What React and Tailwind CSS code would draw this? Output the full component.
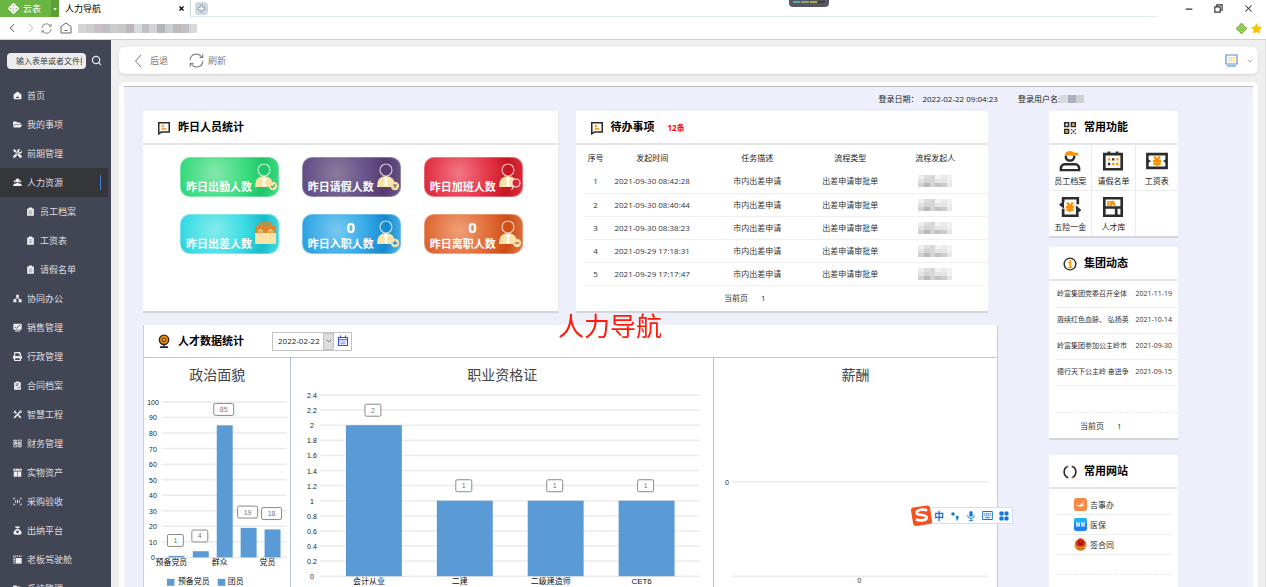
import React from "react";
import {
  ChevronLeft, ChevronRight, ChevronDown, Search, X, Minus, Copy,
} from "lucide-react";
import { FaFolderOpen, FaTools, FaPrint, FaStar, FaCaretDown } from "react-icons/fa";

const INK = "#2c2c2c";
const ORANGE = "#ff9100";

/* ---------- icons ---------- */

function CloverIcon({ className, color = "#ffffff", hole = "#6ab441" }) {
  return (
    <svg viewBox="0 0 24 24" className={className} aria-hidden="true">
      <g fill={color}>
        <rect x="7.500" y="1" width="9" height="9" rx="1.6" transform="rotate(45 12 5.500)" />
        <rect x="7.500" y="14" width="9" height="9" rx="1.6" transform="rotate(45 12 18.500)" />
        <rect x="1" y="7.500" width="9" height="9" rx="1.6" transform="rotate(45 5.500 12)" />
        <rect x="14" y="7.500" width="9" height="9" rx="1.6" transform="rotate(45 18.500 12)" />
      </g>
      <g fill={hole}>
        <circle cx="12" cy="6" r="1.7" />
        <circle cx="12" cy="18" r="1.7" />
        <circle cx="6" cy="12" r="1.7" />
        <circle cx="18" cy="12" r="1.7" />
      </g>
    </svg>
  );
}

function ReloadIcon({ className }) {
  return (
    <svg viewBox="0 0 24 24" className={className} fill="none" stroke="currentColor" strokeWidth="1.7" aria-hidden="true">
      <path d="M1.800 11a10 10 0 0 1 18.200-5M22.200 13A10 10 0 0 1 4 18" />
      <path d="M22 2v5h-5M2 22v-5h5" />
    </svg>
  );
}

function HomeSolid({ className }) {
  return (
    <svg viewBox="0 0 24 24" className={className} fill="currentColor" aria-hidden="true">
      <path d="M12 1 1.500 9.500V20q0 2 2 2h17q2 0 2-2V9.500zM7.500 18.500a4.500 4 0 0 1 9 0z" fillRule="evenodd" />
    </svg>
  );
}

function PeopleIcon({ className }) {
  return (
    <svg viewBox="0 0 24 24" className={className} aria-hidden="true">
      <g fill="currentColor">
        <circle cx="12" cy="6.500" r="5.500" />
        <circle cx="4.500" cy="9" r="2.600" />
        <circle cx="19.500" cy="9" r="2.600" />
        <path d="M0 21q0-6 7-8h10q7 2 7 8z" />
      </g>
      <path d="M5 14.500h4M15 14.500h4" stroke="#35363a" strokeWidth="1.400" />
    </svg>
  );
}

function BoardIcon({ className }) {
  return (
    <svg viewBox="0 0 24 24" className={className} aria-hidden="true">
      <path d="M3 4h5V1h8v3h5v19H3z" fill="currentColor" />
      <path d="M7 10h10M7 14h10M7 18h10" stroke="#7c7f8b" strokeWidth="1.600" />
    </svg>
  );
}

function ContractIcon({ className }) {
  return (
    <svg viewBox="0 0 24 24" className={className} aria-hidden="true">
      <path d="M3 3h5V1h8v2h5v20H3z" fill="currentColor" />
      <path d="M7 8h10M7 12h6M12 16l3 3 5-5" stroke="#424654" strokeWidth="2" fill="none" />
    </svg>
  );
}

function NodesIcon({ className }) {
  return (
    <svg viewBox="0 0 24 24" className={className} fill="currentColor" aria-hidden="true">
      <path d="M8.500 2h7v7h-7zM1 14h8v8H1zM15 14h8v8h-8z" />
      <path d="M12 8v4M5 15l3-4h8l3 4" stroke="currentColor" strokeWidth="2" fill="none" />
    </svg>
  );
}

function TrendIcon({ className }) {
  return (
    <svg viewBox="0 0 24 24" className={className} aria-hidden="true">
      <path d="M1 2h22v16H1zM5 20h14v2.500H5z" fill="currentColor" />
      <path d="m5 10 4 4 10-9" stroke="#424654" strokeWidth="2.400" fill="none" />
    </svg>
  );
}

function AssetIcon({ className }) {
  return (
    <svg viewBox="0 0 24 24" className={className} aria-hidden="true">
      <path d="M1 2h22v5H1zM2 9h9.300v14H2zM12.700 9H22v14h-9.300z" fill="currentColor" />
      <path d="M7 2v5M17 2v5" stroke="#424654" strokeWidth="1.600" />
    </svg>
  );
}

function CockpitIcon({ className }) {
  return (
    <svg viewBox="0 0 24 24" className={className} aria-hidden="true">
      <path d="M7 8h16v15H7z" fill="currentColor" />
      <path d="M1 3h22M3 6v17" stroke="currentColor" strokeWidth="3.500" strokeDasharray="3 1.800" fill="none" />
    </svg>
  );
}

function CrossToolsIcon({ className }) {
  return (
    <svg viewBox="0 0 24 24" className={className} fill="none" stroke="currentColor" strokeWidth="4" aria-hidden="true">
      <path d="M3 21 20 4M4 4l5 5M14 14l7 7" />
      <path d="M1.500 6.500 6.500 1.500M17 2.500h5v5" strokeWidth="2.500" />
    </svg>
  );
}

function ScanIcon({ className }) {
  return (
    <svg viewBox="0 0 24 24" className={className} fill="none" stroke="currentColor" strokeWidth="2" aria-hidden="true">
      <path d="M2 7V3h4M18 3h4v4M22 17v4h-4M6 21H2v-4M7 8v8M12 7v10M17 8v8M10 12h4" />
    </svg>
  );
}

function MoneyBagIcon({ className }) {
  return (
    <svg viewBox="0 0 24 24" className={className} aria-hidden="true">
      <path d="M5 1h14l-3 5H8zM9 8h6c5 3 8 7 8 10q0 5-6 5H7q-6 0-6-5c0-3 3-7 8-10z" fill="currentColor" />
      <circle cx="12" cy="15.500" r="3.500" fill="#424654" />
    </svg>
  );
}

function GridStackIcon({ className }) {
  return (
    <svg viewBox="0 0 24 24" className={className} fill="none" stroke="currentColor" strokeWidth="2" aria-hidden="true">
      <path d="M2 3h8v6H2zM14 3h8v6h-8zM2 15h8v6H2zM14 15h8v6h-8zM1 12h22M6 3v6M18 15v6" />
    </svg>
  );
}

function NoteIcon({ className }) {
  return (
    <svg viewBox="0 0 24 24" className={className} fill="none" aria-hidden="true">
      <path d="M3 3h18v16H7.500L3 22z" stroke={INK} strokeWidth="2.600" />
      <path d="M8 6.500h4v4H8zM8 12h8v3H8z" fill={ORANGE} opacity="0.850" />
    </svg>
  );
}

function WebcamIcon({ className }) {
  return (
    <svg viewBox="0 0 24 24" className={className} fill="none" aria-hidden="true">
      <circle cx="12" cy="10" r="8" fill={ORANGE} stroke={INK} strokeWidth="2.400" />
      <circle cx="12" cy="10" r="3.500" fill={ORANGE} stroke={INK} strokeWidth="1.600" />
      <path d="M12 18v4M5 22.500h14" stroke={INK} strokeWidth="2.600" />
    </svg>
  );
}

function QrIcon({ className }) {
  return (
    <svg viewBox="0 0 24 24" className={className} fill="none" strokeWidth="2.800" aria-hidden="true">
      <path d="M3 3h6.500v6.500H3zM14.500 3H21v6.500h-6.500zM3 14.500h6.500V21H3z" stroke={INK} />
      <path d="M16 4.500h3.500V8H16zM4.500 16H8v3.500H4.500z" fill={ORANGE} />
      <path d="m14 14 8 8M22 14l-8 8" stroke={INK} strokeWidth="2" strokeDasharray="3 1.500" />
    </svg>
  );
}

function InfoIcon({ className }) {
  return (
    <svg viewBox="0 0 24 24" className={className} fill="none" aria-hidden="true">
      <circle cx="12" cy="12" r="10" stroke={INK} strokeWidth="2.400" />
      <path d="M9 9.500h3.500V18M9 18h7M12.500 5v2.500" stroke={ORANGE} strokeWidth="2.600" />
    </svg>
  );
}

function BracketRingIcon({ className }) {
  return (
    <svg viewBox="0 0 24 24" className={className} fill="none" stroke={INK} strokeWidth="2.800" aria-hidden="true">
      <path d="M9 2.300a10.200 10.200 0 0 0 0 19.400M15 2.300a10.200 10.200 0 0 1 0 19.400" />
      <path d="M15 21.800h2.500M7 2.500h2" stroke={ORANGE} strokeWidth="2" />
    </svg>
  );
}

const yuan = "M8.800 7 12 11l3.200-4M7.500 12h9M8 15h8M12 11v6.500";

function StaffIcon({ className }) {
  return (
    <svg viewBox="0 0 24 24" className={className} fill="none" strokeWidth="2.600" aria-hidden="true">
      <path d="M7.500 6v2.500a4.800 4.800 0 0 0 9 0V6" stroke={INK} />
      <path d="M6.500 6q0-5 5.500-5 3.500 0 4.500 2h4.500v3z" fill={ORANGE} />
      <path d="M2 22v-2q0-3.500 4-4.500h12q4 1 4 4.500v2z" stroke={INK} />
    </svg>
  );
}

function LeaveIcon({ className }) {
  return (
    <svg viewBox="0 0 24 24" className={className} fill="none" aria-hidden="true">
      <path d="M2.500 4.500h19V21h-19zM7.500 1.500v4M16.500 1.500v4" stroke={INK} strokeWidth="2.900" />
      <path d="M6.500 9h2.500v2.500H6.500zM15.500 9H18v2.500h-2.500zM11 14h2.500v2.500H11zM15.500 14H18v2.500h-2.500z" fill={ORANGE} />
      <path d="M11 9h2.500v2.500H11zM6.500 14h2.500v2.500H6.500z" fill={INK} />
    </svg>
  );
}

function PayIcon({ className }) {
  return (
    <svg viewBox="0 0 24 24" className={className} fill="none" aria-hidden="true">
      <path d="M1.500 4.500h21v15h-21z" stroke={INK} strokeWidth="2.800" />
      <path d="M1 9.500 5.500 12 1 15zM23 9.500 18.500 12l4.500 3z" fill={INK} />
      <path d={yuan} stroke={ORANGE} strokeWidth="2.500" />
    </svg>
  );
}

function InsuranceIcon({ className }) {
  return (
    <svg viewBox="0 0 24 24" className={className} fill="none" aria-hidden="true">
      <path d="M4.500 6.500V2.500h16V9M20 18v3.500H4.500V14" stroke={INK} strokeWidth="2.900" />
      <path d="M0 9.500 5.500 5v9zM24.500 15.500 18.500 10v10z" fill={INK} />
      <path d={yuan} stroke={ORANGE} strokeWidth="2.500" />
    </svg>
  );
}

function TalentIcon({ className }) {
  return (
    <svg viewBox="0 0 24 24" className={className} fill="none" aria-hidden="true">
      <path d="M2.500 2.500h19v19h-19zM2.500 12.500h19M15.500 13v8.500" stroke={INK} strokeWidth="2.900" />
      <path d="M7 11V5.500M10 11V5.500M11.500 5.500l2.500 5.500" stroke={ORANGE} strokeWidth="2.400" />
    </svg>
  );
}

function PersonBadge({ kind }) {
  if (kind === "case") {
    return (
      <svg viewBox="0 0 24 28" className="h-7 w-6" aria-hidden="true">
        <path d="M7 6V3.500h9V6" fill="none" stroke="#d58a32" strokeWidth="2.500" />
        <rect x="1" y="6" width="21" height="18" rx="1" fill="#fae3a6" />
        <path d="M1 6h21v7H1z" fill="#d58a32" />
        <path d="M5 10h3v4H5zM15 10h3v4h-3z" fill="#d58a32" stroke="#fae3a6" />
      </svg>
    );
  }
  return (
    <svg viewBox="0 0 24 28" className="h-7 w-6" fill="none" aria-hidden="true">
      <circle cx="10" cy="7" r="6" stroke="#ffffff" strokeOpacity="0.750" strokeWidth="1.100" />
      <path d="M1 24q0-11 9-11t9 11z" fill="#fae3a6" />
      <path d="m10 13-2 3 1 2-.500 4 1.500 2 1.500-2L11 18l1-2z" fill="#ffffff" />
      {kind === "search" ? (
        <g stroke="#ffe9e4" strokeWidth="1.100">
          <circle cx="18" cy="20" r="4" fill="#d62a38" />
          <path d="m16 23-2.500 4" />
        </g>
      ) : (
        <g>
          <circle cx="19" cy="23" r="4.200" fill="#fae3a6" />
          {kind === "check" && <path d="m17 23 1.500 1.500L21 21.500" stroke="#36b868" strokeWidth="1.200" />}
          {kind === "x" && <path d="m17.500 21.500 3 3m0-3-3 3" stroke="#6a5684" strokeWidth="1.300" />}
          {kind === "plus" && <path d="M16.800 23h4.400M19 20.800v4.400" stroke="#2b90cc" strokeWidth="1.300" />}
          {kind === "minus" && <path d="M16.800 23h4.400" stroke="#d06030" strokeWidth="1.400" />}
        </g>
      )}
    </svg>
  );
}

/* ---------- small pieces ---------- */

function NameBlocks() {
  return (
    <div className="mx-auto grid w-[34px] grid-cols-6" aria-label="已隐藏">
      <i className="h-1 bg-[#eeeeee]" /><i className="h-1 bg-[#dedede]" /><i className="h-1 bg-[#d6d6d6]" />
      <i className="h-1 bg-[#f4f4f4]" /><i className="h-1 bg-[#e8ecec]" /><i className="h-1 bg-[#f2f2f2]" />
      <i className="h-1 bg-[#e2e2e2]" /><i className="h-1 bg-[#d4d4d4]" /><i className="h-1 bg-[#d9d9d9]" />
      <i className="h-1 bg-[#e6e6e6]" /><i className="h-1 bg-[#e6e6e6]" /><i className="h-1 bg-[#edf1f1]" />
      <i className="h-1 bg-[#d0d0d0]" /><i className="h-1 bg-[#b9b9b9]" /><i className="h-1 bg-[#d2d2d2]" />
      <i className="h-1 bg-[#c3c3c3]" /><i className="h-1 bg-[#cccccc]" /><i className="h-1 bg-[#e1e8e8]" />
    </div>
  );
}

function Panel({ icon: Icon, title, extra, className = "", children }) {
  return (
    <section className={`border-b-2 border-[#d3d6dc] bg-white ${className}`}>
      <header className="flex h-[34px] items-center gap-[7px] border-b-2 border-[#e6e6e6] pt-px pl-[14px]">
        <Icon className="size-[14px]" />
        <h2 className="text-[11px] font-bold text-black">{title}</h2>
        {extra}
      </header>
      {children}
    </section>
  );
}

/* ---------- browser chrome ---------- */

function TabBar() {
  return (
    <div className="flex h-[17px] items-stretch">
      <button className="flex w-[51px] items-center gap-1 bg-[#6ab441] pl-2 text-[9px] text-white">
        <CloverIcon className="size-[11px]" />
        云表
      </button>
      <button aria-label="菜单" className="flex w-2 items-center justify-center bg-[#5aa032] text-white">
        <FaCaretDown className="size-[6px]" />
      </button>
      <div className="flex w-[132px] items-center justify-between border-r border-[#cfdde6] pr-[5px] pl-[6px] text-[9px] text-black">
        人力导航
        <button aria-label="关闭标签"><X className="size-[7px]" strokeWidth={4} /></button>
      </div>
      <div className="flex flex-1 items-center border-b border-[#dfeaf2] pl-1">
        <button aria-label="新建标签" className="flex size-[13px] items-center justify-center rounded-sm bg-[#cdd9e2]">
          <svg viewBox="0 0 12 12" className="size-[9px]" fill="#ffffff" stroke="#7f8d99" strokeWidth="1" aria-hidden="true">
            <path d="M4.500 1.500h3v3h3v3h-3v3h-3v-3h-3v-3h3z" />
          </svg>
        </button>
      </div>
      <div className="flex w-[109px] items-center justify-end gap-5 pr-3 text-[#333333]">
        <button aria-label="最小化"><Minus className="size-[10px]" strokeWidth={3} /></button>
        <button aria-label="还原">
          <svg viewBox="0 0 16 16" className="size-[9px]" fill="none" stroke="currentColor" strokeWidth="2" aria-hidden="true">
            <path d="M1.500 5h9.500v9.500H1.500zM5 5V1.500h9.500V11H11" />
          </svg>
        </button>
        <button aria-label="关闭"><X className="size-[11px]" strokeWidth={2.2} /></button>
      </div>
    </div>
  );
}

function AddressBar() {
  return (
    <div className="flex h-[23px] items-center border-b border-[#cfcfcf] pr-1 pl-[5px] text-[#666666]">
      <button aria-label="后退"><ChevronLeft className="size-[14px]" strokeWidth={1.8} /></button>
      <button aria-label="前进" className="ml-[5px] text-[#c4c4c4]"><ChevronRight className="size-[14px]" strokeWidth={1.8} /></button>
      <button aria-label="重新加载" className="ml-[3px]"><ReloadIcon className="size-[11px]" /></button>
      <button aria-label="主页" className="ml-[8px]">
        <svg viewBox="0 0 24 24" className="size-3" fill="none" stroke="currentColor" strokeWidth="2" aria-hidden="true">
          <path d="M12 2 2 9v13h20V9zM9 17h6" />
        </svg>
      </button>
      <div className="ml-[6px] flex h-[9px] w-[119px]">
        <i className="flex-1 bg-[#d6d5d6]" /><i className="flex-1 bg-[#d0cdd0]" /><i className="flex-1 bg-[#c9c1c4]" />
        <i className="flex-1 bg-[#bfbfc4]" /><i className="flex-1 bg-[#cbcacc]" /><i className="flex-1 bg-[#c8c8c8]" />
        <i className="flex-1 bg-[#bdb6ba]" /><i className="flex-1 bg-[#d9d9dd]" /><i className="flex-1 bg-[#bfc0c4]" />
        <i className="flex-1 bg-[#d4d4d8]" /><i className="flex-1 bg-[#b2b5b9]" /><i className="flex-1 bg-[#cbced2]" />
        <i className="flex-1 bg-[#c0b9b8]" /><i className="flex-1 bg-[#bfc1c6]" /><i className="flex-1 bg-[#d9d9dd]" />
      </div>
      <div className="ml-auto flex items-center gap-1">
        <CloverIcon className="size-[11px]" color="#7dbb42" hole="#d9f0b8" />
        <FaStar className="size-[11px] text-[#ffc400]" />
      </div>
    </div>
  );
}

/* ---------- sidebar ---------- */

const NAV = [
  { label: "首页", icon: HomeSolid },
  { label: "我的事项", icon: FaFolderOpen },
  { label: "前期管理", icon: FaTools },
  { label: "人力资源", icon: PeopleIcon, active: true },
  { label: "员工档案", icon: BoardIcon, sub: true },
  { label: "工资表", icon: BoardIcon, sub: true },
  { label: "请假名单", icon: BoardIcon, sub: true },
  { label: "协同办公", icon: NodesIcon },
  { label: "销售管理", icon: TrendIcon },
  { label: "行政管理", icon: FaPrint },
  { label: "合同档案", icon: ContractIcon },
  { label: "智慧工程", icon: CrossToolsIcon },
  { label: "财务管理", icon: GridStackIcon },
  { label: "实物资产", icon: AssetIcon },
  { label: "采购验收", icon: ScanIcon },
  { label: "出纳平台", icon: MoneyBagIcon },
  { label: "老板驾驶舱", icon: CockpitIcon },
  { label: "系统管理", icon: FaFolderOpen },
];

function Sidebar() {
  return (
    <aside className="w-[111px] shrink-0 overflow-y-auto bg-[#424654] [scrollbar-width:none]">
      <div className="flex h-[41px] items-center gap-[5px] pl-[7px]">
        <input
          aria-label="搜索"
          placeholder="输入表单或者文件搜索"
          className="h-4 w-[79px] rounded-sm bg-[#ececee] pr-1 pl-[9px] text-[8px] placeholder:text-[#444444]"
        />
        <button aria-label="查找" className="text-[#e4e5e8]"><Search className="size-[11px]" strokeWidth={2.8} /></button>
      </div>
      <nav>
        {NAV.map(({ label, icon: Icon, sub, active }) => (
          <a
            key={label}
            href="#"
            className={
              "mr-[3px] flex h-[29px] items-center gap-[5px] text-[9px] text-[#dcdde1] " +
              (sub ? "pl-[26px] " : "pl-[13px] ") +
              (active ? "bg-[#35363a]" : "")
            }
          >
            <Icon className="size-[9px] text-[#f0f0f2]" />
            {label}
            {active && <span className="mr-[7px] ml-auto h-[15px] w-px bg-[#3f7fd0]" />}
          </a>
        ))}
      </nav>
    </aside>
  );
}

/* ---------- panels ---------- */

const STATS = [
  { label: "昨日出勤人数", kind: "check", bg: "bg-[radial-gradient(circle_at_35%_40%,#85e8ac,#3ddc80_45%,#1fc568_75%,#45dc88)]" },
  { label: "昨日请假人数", kind: "x", bg: "bg-[radial-gradient(circle_at_35%_40%,#8a7c9c,#67528a_45%,#543a70_75%,#6b588a)]" },
  { label: "昨日加班人数", kind: "search", bg: "bg-[radial-gradient(circle_at_35%_40%,#f07884,#e43548_45%,#c81420_75%,#dc3040)]" },
  { label: "昨日出差人数", kind: "case", bg: "bg-[radial-gradient(circle_at_35%_40%,#84ecec,#3cdce4_45%,#18bccc_75%,#48dce4)]" },
  { label: "昨日入职人数", kind: "plus", value: "0", bg: "bg-[radial-gradient(circle_at_35%_40%,#78c8f0,#35a9e6_45%,#1488cc_75%,#50b8ec)]" },
  { label: "昨日离职人数", kind: "minus", value: "0", bg: "bg-[radial-gradient(circle_at_35%_40%,#f0a078,#e26c38_45%,#cc4c14_75%,#e07848)]" },
];

function StatsPanel() {
  return (
    <Panel icon={NoteIcon} title="昨日人员统计" className="flex-[415] border-r border-r-[#e4e6ec]">
      <div className="grid grid-cols-3 gap-x-[23px] gap-y-[17px] pt-3 pr-[35px] pl-[37px]">
        {STATS.map((s) => (
          <div key={s.label} className={`flex h-10 items-end justify-between rounded-[10px] border border-white/30 pl-[5px] ${s.bg}`}>
            <div className="flex min-w-0 flex-col items-center pb-px text-white">
              {s.value && <span className="pl-5 text-[15px] leading-[18px] font-bold">{s.value}</span>}
              <span className="text-[11px] leading-4 font-bold whitespace-nowrap">{s.label}</span>
            </div>
            <div className="flex h-full items-center">
              <PersonBadge kind={s.kind} />
            </div>
          </div>
        ))}
      </div>
    </Panel>
  );
}

const TODOS = [
  ["1", "2021-09-30 08:42:28"],
  ["2", "2021-09-30 08:40:44"],
  ["3", "2021-09-30 08:38:23"],
  ["4", "2021-09-29 17:18:31"],
  ["5", "2021-09-29 17:17:47"],
];

function TodoPanel() {
  return (
    <Panel
      icon={NoteIcon}
      title="待办事项"
      className="flex-[413]"
      extra={<span className="ml-[6px] text-[8px] font-bold text-[#ff0000]">12条</span>}
    >
      <table className="ml-2 w-[98%] table-fixed text-center text-[8px] whitespace-nowrap text-[#333333]">
        <colgroup>
          <col className="w-[6%]" /><col className="w-[22%]" /><col className="w-[30%]" /><col className="w-[16%]" /><col className="w-[26%]" />
        </colgroup>
        <thead>
          <tr className="h-[25px] text-[#222222]">
            <th className="font-normal">序号</th>
            <th className="font-normal">发起时间</th>
            <th className="font-normal">任务描述</th>
            <th className="font-normal">流程类型</th>
            <th className="font-normal">流程发起人</th>
          </tr>
        </thead>
        <tbody>
          {TODOS.map(([n, time]) => (
            <tr key={n} className="h-[23px] border-b border-[#f0f0f0]">
              <td>{n}</td>
              <td>{time}</td>
              <td>市内出差申请</td>
              <td>出差申请审批单</td>
              <td><NameBlocks /></td>
            </tr>
          ))}
        </tbody>
      </table>
      <p className="flex h-[25px] items-center gap-[13px] pl-[36%] text-[8px] text-[#333333]">
        <span>当前页</span>
        <span>1</span>
      </p>
    </Panel>
  );
}

/* ---------- charts ---------- */

function ValueTag({ x, y, w, children }) {
  return (
    <g>
      <rect x={x - w / 2} y={y - 6} width={w} height="12" rx="1.500" fill="#ffffff" stroke="#8a8a8a" />
      <text x={x} y={y + 2.5} textAnchor="middle" fontSize="7" fill="#777777">{children}</text>
    </g>
  );
}

function AxisGrid({ values, x0, x1, labelX, y0, step }) {
  return values.map((v, i) => (
    <g key={v}>
      <path d={`M${x0} ${y0 + i * step}H${x1}`} stroke="#ebebeb" strokeWidth="1.500" />
      <text x={labelX} y={y0 + i * step + 3} textAnchor="middle" fontSize="7" fill="#222222">{v}</text>
    </g>
  ));
}

const chartText = "block w-full font-['Liberation_Sans','Noto_Sans_CJK_SC',sans-serif]";

function PoliticsChart() {
  const bars = [
    { x: 32.5, v: 1, w: 16, tag: 149 },
    { x: 57, v: 4, w: 16, tag: 144.5 },
    { x: 81, v: 85, w: 20, tag: 17.5 },
    { x: 105, v: 19, w: 20, tag: 120.5 },
    { x: 129, v: 18, w: 20, tag: 122 },
  ];
  return (
    <svg viewBox="0 0 147 212" className={chartText} role="img" aria-label="政治面貌">
      <AxisGrid values={["100", "90", "80", "70", "60", "50", "40", "30", "20", "10", "0"]} x0={18} x1={143} labelX={9} y0={10} step={15.6} />
      {bars.map((b) => (
        <g key={b.x}>
          <rect x={b.x - 8} y={166 - b.v * 1.56} width="16" height={b.v * 1.56} fill="#5b9bd5" />
          <ValueTag x={b.x - 1} y={b.tag} w={b.w}>{b.v}</ValueTag>
        </g>
      ))}
      <g fontSize="8" fill="#111111">
        <text x="27.500" y="174" textAnchor="middle">预备党员</text>
        <text x="76" y="174" textAnchor="middle">群众</text>
        <text x="124" y="174" textAnchor="middle">党员</text>
        <rect x="23" y="187.500" width="7.500" height="7" fill="#5b9bd5" />
        <text x="34" y="193">预备党员</text>
        <rect x="74" y="187.500" width="7.500" height="7" fill="#5b9bd5" />
        <text x="84" y="193">团员</text>
      </g>
    </svg>
  );
}

function CertificateChart() {
  const bars = [
    { x: 83, v: 2, label: "会计从业" },
    { x: 174, v: 1, label: "二建" },
    { x: 265, v: 1, label: "二级建造师" },
    { x: 356, v: 1, label: "CET6" },
  ];
  const top = 3;
  const step = 15.12;
  const base = top + step * 12;
  return (
    <svg viewBox="0 0 422 212" className={chartText} role="img" aria-label="职业资格证">
      <AxisGrid
        values={["2.4", "2.2", "2", "1.8", "1.6", "1.4", "1.2", "1", "0.8", "0.6", "0.4", "0.2", "0"]}
        x0={29} x1={409} labelX={21} y0={top} step={step}
      />
      {bars.map((b) => (
        <g key={b.x}>
          <rect x={b.x - 28} y={base - b.v * step * 5} width="56" height={b.v * step * 5} fill="#5b9bd5" />
          <ValueTag x={b.x - 1} y={base - b.v * step * 5 - 15} w={16}>{b.v}</ValueTag>
          <text x={b.x - 5} y={base + 8} textAnchor="middle" fontSize="8" fill="#111111">{b.label}</text>
        </g>
      ))}
    </svg>
  );
}

function SalaryChart() {
  return (
    <svg viewBox="0 0 284 212" className={chartText} role="img" aria-label="薪酬">
      <g stroke="#ebebeb" strokeWidth="1.500">
        <path d="M18 90H275M18 185H275" />
      </g>
      <g fontSize="7" fill="#222222" textAnchor="middle">
        <text x="13" y="93">0</text>
        <text x="146" y="192">0</text>
      </g>
    </svg>
  );
}

function DataPanel() {
  const heading = "text-center text-[14px] leading-[34px] text-[#444444]";
  return (
    <section className="border-x border-[#c6d2e2] bg-white">
      <header className="flex h-[33px] items-center gap-[7px] border-b border-[#b9cbdc] pt-px pl-[13px]">
        <WebcamIcon className="size-[14px]" />
        <h2 className="pt-px text-[11px] font-bold text-black">人才数据统计</h2>
        <div className="ml-[21px] flex h-[19px] items-stretch border border-[#c4c4c4]">
          <label className="flex items-stretch">
            <span className="sr-only">日期</span>
            <select className="w-[50px] appearance-none bg-white pl-[5px] text-[8px] text-[#222222]">
              <option>2022-02-22</option>
            </select>
            <span className="flex w-[11px] items-center justify-center border border-[#c2c2c2] bg-[#dddddd] text-[#555555]">
              <ChevronDown className="size-2" />
            </span>
          </label>
          <button aria-label="打开日历" className="flex w-[17px] items-center justify-center">
            <svg viewBox="0 0 24 24" className="size-3" fill="none" stroke="#3355dd" strokeWidth="2.400" aria-hidden="true">
              <path d="M3 5h18v16H3zM2 9.500h20M7 1v5M17 1v5" />
              <path d="M7 14h10M7 17.500h10" strokeWidth="2" strokeOpacity="0.650" />
            </svg>
          </button>
        </div>
      </header>
      <div className="flex">
        <div className="flex-[147]">
          <h3 className={heading}>政治面貌</h3>
          <PoliticsChart />
        </div>
        <div className="flex-[423] border-l border-[#b3c3d8]">
          <h3 className={heading}>职业资格证</h3>
          <CertificateChart />
        </div>
        <div className="flex-[284] border-l border-[#b3c3d8]">
          <h3 className={heading}>薪酬</h3>
          <SalaryChart />
        </div>
      </div>
    </section>
  );
}

/* ---------- right column ---------- */

const FUNCTIONS = [
  { label: "员工档案", icon: StaffIcon },
  { label: "请假名单", icon: LeaveIcon },
  { label: "工资表", icon: PayIcon },
  { label: "五险一金", icon: InsuranceIcon },
  { label: "人才库", icon: TalentIcon },
];

const NEWS = [
  ["岭富集团党委召开全体", "2021-11-19"],
  ["赓续红色血脉、 弘扬英", "2021-10-14"],
  ["岭富集团参加公主岭市", "2021-09-30"],
  ["德行天下公主岭 奋进争", "2021-09-15"],
];

function SiteLogo({ name }) {
  if (name === "吉事办") {
    return (
      <svg viewBox="0 0 26 26" className="size-[13px]" aria-hidden="true">
        <rect width="26" height="26" rx="5" fill="#f58a48" />
        <path d="M4 13c5 3 8 1 10-1l6-5-3 6 4 1c-5 4-12 5-17-1z" fill="#fff3ea" />
      </svg>
    );
  }
  if (name === "医保") {
    return (
      <svg viewBox="0 0 26 26" className="size-[13px]" aria-hidden="true">
        <rect width="26" height="26" rx="5" fill="#1f80f4" />
        <path d="M5 0h16q5 0 5 5v6H0V5q0-5 5-5z" fill="#22aef8" />
        <path d="M4 9h8v8H4zM14 9h8v8h-8z" fill="#d4ecff" />
        <path d="M6 12h4M8 10v6M16 12h5M18.500 10v6" stroke="#5cb0f4" />
      </svg>
    );
  }
  return (
    <svg viewBox="0 0 26 26" className="size-[13px]" aria-hidden="true">
      <circle cx="13" cy="14" r="12" fill="#e0962c" />
      <path d="M3 9q10-17 20 0l-2 6q-8 6-16 0z" fill="#e02c14" />
      <path d="M8 8h4M14 8h4M9 12h8" stroke="#3c0d05" strokeWidth="2" />
      <path d="M6 20q7 5 14 0" stroke="#a8601c" strokeWidth="2" fill="none" />
    </svg>
  );
}

function RightColumn() {
  return (
    <div className="flex w-[129px] shrink-0 flex-col">
      <Panel icon={QrIcon} title="常用功能" className="mb-[9px]">
        <div className="grid grid-cols-3 gap-px bg-[#ebebeb]">
          {FUNCTIONS.map(({ label, icon: Icon }) => (
            <button key={label} className="flex h-[45px] flex-col items-center justify-center gap-px bg-white pt-1 text-[8px] leading-4 text-[#222222]">
              <Icon className="size-[22px]" />
              {label}
            </button>
          ))}
          <span className="bg-white" />
        </div>
      </Panel>
      <Panel icon={InfoIcon} title="集团动态" className="mb-[15px]">
        <ul className="pt-px pl-[6px] text-[#333333]">
          {NEWS.map(([title, date]) => (
            <li key={date} className="h-[26px] border-b border-[#eeeeee]">
              <a href="#" className="flex h-full items-center justify-between pr-[6px] pl-[2px] text-[7px] whitespace-nowrap">
                <span>{title}</span>
                <span>{date}</span>
              </a>
            </li>
          ))}
          <li className="h-[27px] border-b border-dashed border-[#e4e6ee]" />
        </ul>
        <p className="flex h-[25px] items-center gap-[13px] pl-[31px] text-[8px] text-[#333333]">
          <span>当前页</span>
          <span>1</span>
        </p>
      </Panel>
      <Panel icon={BracketRingIcon} title="常用网站">
        <ul className="px-[6px] pt-[6px] text-[8px] text-[#333333]">
          {["吉事办", "医保", "签合同"].map((name) => (
            <li key={name} className="h-5 border-b border-[#eeeeee]">
              <a href="#" className="flex h-full items-center gap-[3px] pl-[19px]">
                <SiteLogo name={name} />
                {name}
              </a>
            </li>
          ))}
          <li className="h-5 border-b border-dashed border-[#e4e6ee]" />
          <li className="h-5" />
        </ul>
      </Panel>
    </div>
  );
}

/* ---------- input method bar ---------- */

function InputMethodBar() {
  return (
    <div className="absolute right-[253px] bottom-[60px] flex items-center">
      <svg viewBox="0 0 24 24" className="z-10 -mr-3 size-[23px]" aria-hidden="true">
        <rect x="2" y="2.500" width="20" height="19.500" rx="3" fill="#f4511e" transform="rotate(-9 12 12)" />
        <path d="M18 6.500c-6-1.500-11 0-11 2.800 0 3.200 10.500 1.200 10.500 4.700 0 3-6.500 4-11.500 2.200" fill="none" stroke="#ffffff" strokeWidth="2.800" />
      </svg>
      <div className="flex h-[17px] items-center gap-[6px] border border-[#cfe0f0] bg-white pr-[3px] pl-3 text-[#1277dd]">
        <span className="text-[10px] leading-4 font-bold">中</span>
        <svg viewBox="0 0 20 20" className="size-[10px]" fill="currentColor" aria-hidden="true">
          <circle cx="6" cy="6" r="3.500" />
          <path d="M12 10h5v5l-3 4h-2l1.500-4H12z" />
        </svg>
        <svg viewBox="0 0 24 24" className="size-[10px]" fill="none" stroke="currentColor" strokeWidth="2.200" aria-hidden="true">
          <rect x="8" y="0" width="8" height="14" rx="4" fill="currentColor" stroke="none" />
          <path d="M3.500 10q1 8 8.500 8t8.500-8M12 18v4M7 23h10" />
        </svg>
        <svg viewBox="0 0 24 24" className="size-[11px]" fill="none" stroke="currentColor" strokeWidth="2.200" aria-hidden="true">
          <rect x="1.500" y="3.500" width="21" height="17" rx="1" />
          <path d="M5 8.500h14M5 12.500h14" strokeDasharray="2.500 1.300" strokeWidth="2.400" />
          <path d="M7 16.800h10" />
        </svg>
        <svg viewBox="0 0 24 24" className="size-[10px]" fill="currentColor" aria-hidden="true">
          <rect x="1" y="1" width="10" height="10" rx="2.500" />
          <circle cx="18" cy="6" r="5.200" />
          <rect x="1" y="13" width="10" height="10" rx="2.500" />
          <rect x="13" y="13" width="10" height="10" rx="2.500" />
        </svg>
      </div>
    </div>
  );
}

/* ---------- page ---------- */

export default function App() {
  return (
    <div className="relative flex h-screen flex-col overflow-hidden bg-white font-['Open_Sans','Noto_Sans_CJK_SC',sans-serif]" lang="zh-CN">
      <TabBar />
      <AddressBar />
      <div className="flex min-h-0 flex-1">
        <Sidebar />
        <main className="flex min-w-0 flex-1 flex-col gap-2 border-r border-[#dddddd] bg-[#efefef] pt-[7px] pr-[7px] pl-2">
          <div className="flex h-[27px] shrink-0 items-center rounded-md bg-white px-3 text-[9px] text-[#777777] shadow-sm">
            <button className="flex items-center gap-[3px]">
              <svg viewBox="0 0 16 16" className="size-4" fill="none" stroke="currentColor" aria-hidden="true">
                <path d="M10 2 4.500 8l5.500 6" />
              </svg>
              后退
            </button>
            <button className="ml-[21px] flex items-center gap-1"><ReloadIcon className="size-[15px]" />刷新</button>
            <button aria-label="视图" className="ml-auto flex items-center gap-2 text-[#aaaaaa]">
              <svg viewBox="0 0 26 26" className="size-[13px]" fill="none" aria-hidden="true">
                <path d="M2 2h22v18H2z" stroke="#5b8fd8" strokeWidth="2.400" />
                <path d="M4 24h18" stroke="#5b8fd8" strokeWidth="2.400" />
                <path d="M7 7h3v3H7zM12 7h3v3h-3zM17 7h3v3h-3zM7 12h3v3H7zM12 12h3v3h-3zM17 12h3v3h-3z" fill="#f6c94a" />
              </svg>
              <ChevronDown className="-mr-2 size-2" strokeWidth={3} />
            </button>
          </div>
          <div className="min-h-0 flex-1 overflow-y-auto rounded-t-md bg-white px-[5px] pt-1 [scrollbar-width:none]">
            <div className="border-t border-[#bdbdbd] bg-[#edf0fa] pr-[75px] pl-[19px]">
              <div className="flex h-6 items-center justify-end pr-[94px] text-[8px] text-[#222222]">
                <span>登录日期：</span>
                <span className="ml-1">2022-02-22 09:04:23</span>
                <span className="ml-5">登录用户名:</span>
                <span className="flex h-2 w-6">
                  <i className="flex-1 bg-[#d9dae0]" /><i className="flex-1 bg-[#aeb0bd]" /><i className="flex-1 bg-[#d0d0d4]" />
                </span>
              </div>
              <div className="flex items-start gap-[51px]">
                <div className="flex min-w-0 flex-1 flex-col gap-3">
                  <div className="flex gap-[17px] pr-[10px]">
                    <StatsPanel />
                    <TodoPanel />
                  </div>
                  <DataPanel />
                </div>
                <RightColumn />
              </div>
            </div>
          </div>
        </main>
      </div>
      <div className="pointer-events-none absolute top-[306px] left-[558px] text-[26px] leading-10 text-[#ff1a0a]">人力导航</div>
      <div className="absolute top-0 left-[789px] flex h-[7px] w-10 items-start gap-px rounded-b-sm bg-[#555763] px-1 pt-px">
        <i className="h-[2px] flex-1 bg-[#4fb3a0]" /><i className="h-[2px] flex-1 bg-[#7fae6a]" />
        <i className="h-[2px] flex-1 bg-[#b5a545]" /><i className="h-[2px] flex-1 bg-[#3c3d47]" />
      </div>
      <InputMethodBar />
    </div>
  );
}
